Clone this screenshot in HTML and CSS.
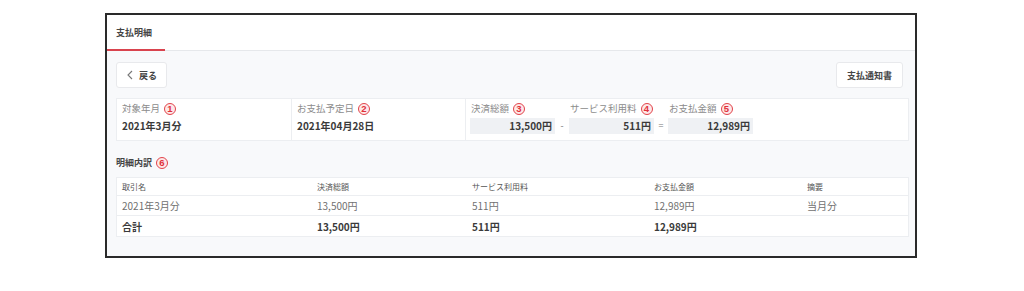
FILE: index.html
```html
<!DOCTYPE html>
<html lang="ja">
<head>
<meta charset="utf-8">
<link rel="stylesheet" href="styles.css">
</head>
<body>
<div class="frame">
  <div class="tabs">
    <div class="tab active">支払明細</div>
  </div>
  <div class="content">
    <div class="toolbar">
      <button class="btn back"><svg width="8" height="10" viewBox="0 0 8 10"><path d="M6 1 L2 5 L6 9" fill="none" stroke="#777" stroke-width="1.1"/></svg><span>戻る</span></button>
      <button class="btn notice">支払通知書</button>
    </div>
    <div class="info">
      <div class="cell c1">
        <div class="label">対象年月 <span class="num">1</span></div>
        <div class="value">2021年3月分</div>
      </div>
      <div class="cell c2">
        <div class="label">お支払予定日<span class="num">2</span></div>
        <div class="value">2021年04月28日</div>
      </div>
      <div class="cell c3">
        <div class="calc">
          <div class="item">
            <div class="label">決済総額 <span class="num">3</span></div>
            <div class="box">13,500円</div>
          </div>
          <div class="op">-</div>
          <div class="item">
            <div class="label">サービス利用料 <span class="num">4</span></div>
            <div class="box">511円</div>
          </div>
          <div class="op">=</div>
          <div class="item">
            <div class="label">お支払金額 <span class="num">5</span></div>
            <div class="box">12,989円</div>
          </div>
        </div>
      </div>
    </div>
    <div class="section-title">明細内訳 <span class="num">6</span></div>
    <div class="table">
      <div class="row head">
        <div>取引名</div><div>決済総額</div><div>サービス利用料</div><div>お支払金額</div><div>摘要</div>
      </div>
      <div class="row body">
        <div>2021年3月分</div><div>13,500円</div><div>511円</div><div>12,989円</div><div>当月分</div>
      </div>
      <div class="row total">
        <div>合計</div><div>13,500円</div><div>511円</div><div>12,989円</div><div></div>
      </div>
    </div>
  </div>
</div>
</body>
</html>
```

FILE: styles.css
```css
* { box-sizing: border-box; }
html, body { margin: 0; background: #fff; }
body {
  padding: 13px 0 0 105px;
  font-family: "Noto Sans CJK JP", "Noto Sans", sans-serif;
  color: #333;
}
.frame {
  width: 812px;
  height: 245px;
  border: 2px solid #2a2a2a;
  display: flex;
  flex-direction: column;
  background: #f8f9fb;
}
.tabs {
  height: 36px;
  background: #fff;
  border-bottom: 1px solid #e6e8eb;
  display: flex;
  align-items: stretch;
}
.tab {
  width: 58px;
  padding-left: 9px;
  font-size: 9px;
  font-weight: 700;
  color: #444;
  display: flex;
  align-items: center;
  padding-top: 1px;
}
.tab.active { border-bottom: 2px solid #d9434e; margin-bottom: -1px; }
.content {
  flex: 1;
  padding: 11px 6px 0 9px;
}
.toolbar {
  display: flex;
  justify-content: space-between;
  height: 26px;
}
.btn {
  font-family: inherit;
  background: #fff;
  border: 1px solid #e8e9ec;
  border-radius: 3px;
  font-size: 9px;
  font-weight: 700;
  color: #444;
  display: flex;
  align-items: center;
  padding: 0;
}
.back { width: 51px; padding-left: 9px; gap: 5px; }
.notice { width: 67px; justify-content: center; margin-right: 6px; }
.info {
  margin-top: 10px;
  height: 43px;
  background: #fff;
  border: 1px solid #eceef1;
  display: flex;
}
.cell { padding: 3px 0 0 5px; }
.c1 { width: 175px; border-right: 1px solid #eceef1; }
.c2 { width: 174px; border-right: 1px solid #eceef1; }
.c3 { flex: 1; padding-left: 4px; }
.label {
  font-size: 9.5px;
  color: #8c8c8c;
  line-height: 13px;
  display: flex;
  align-items: center;
  gap: 2px;
  white-space: nowrap;
}
.value {
  font-size: 10px;
  font-weight: 700;
  color: #3a3a3a;
  margin-top: 4px;
  line-height: 14px;
}
.num {
  display: inline-flex;
  align-items: center;
  justify-content: center;
  width: 12px;
  height: 12px;
  border-radius: 50%;
  border: 1px solid #e2434a;
  background: #fde8e8;
  color: #e0303a;
  font-size: 9.5px;
  font-weight: 700;
  line-height: 1;
  font-family: "Liberation Sans", sans-serif;
  margin-left: 2px;
}
.calc { display: flex; align-items: flex-end; }
.item { display: flex; flex-direction: column; }
.item .label { padding-left: 1px; }
.box {
  margin-top: 3px;
  width: 85px;
  height: 16px;
  background: #eff1f4;
  font-size: 10px;
  font-weight: 700;
  color: #3a3a3a;
  text-align: right;
  padding-right: 3px;
  line-height: 16px;
}
.op {
  width: 14px;
  text-align: center;
  font-size: 9px;
  color: #777;
  height: 16px;
  line-height: 16px;
}
.section-title {
  margin-top: 16px;
  font-size: 9px;
  font-weight: 700;
  color: #444;
  line-height: 12px;
  display: flex;
  align-items: center;
  gap: 2px;
}
.table {
  margin-top: 8px;
  background: #fff;
  border: 1px solid #eceef1;
}
.row {
  display: grid;
  grid-template-columns: 195px 155px 182px 153px 1fr;
  align-items: center;
}
.row > div { padding-left: 5px; white-space: nowrap; }
.row.head { height: 18px; font-size: 8px; color: #555; border-bottom: 1px solid #eceef1; }
.row.body { height: 20px; font-size: 10px; color: #707070; border-bottom: 1px solid #eceef1; }
.row.total { height: 20px; font-size: 10px; font-weight: 700; color: #3a3a3a; }
```
